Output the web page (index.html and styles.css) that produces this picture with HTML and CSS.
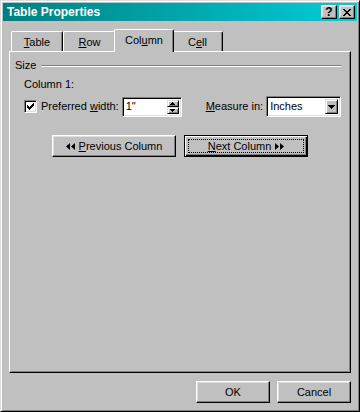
FILE: index.html
```html
<!DOCTYPE html>
<html lang="en">
  <head>
    <meta charset="UTF-8" />
    <meta name="viewport" content="width=device-width, initial-scale=1.0" />
    <title>Table Properties</title>

    <!-- Styles -->
    <link rel="stylesheet" href="styles.css">
  </head>
  <body>
    <div class="window">
      <!-- Title Bar -->
      <div class="titlebar">
        <span class="title">Table Properties</span>
        <div class="title-buttons">
          <button class="title-btn help">?</button>
          <button class="title-btn">
            <svg width="8" height="7" viewBox="0 0 8 7">
              <path d="M0 0h2v1h1v1h2V1h1V0h2v1H7v1H6v1H5v1h1v1h1v1h1v1H6V6H5V5H3v1H2v1H0V6h1V5h1V4h1V3H2V2H1V1H0z" fill="#000" />
            </svg>
          </button>
        </div>
      </div>

      <div class="dialog">
        <!-- Tabs -->
        <div class="tabs">
          <div class="tab tab-table"><span><u>T</u>able</span></div>
          <div class="tab tab-row"><span><u>R</u>ow</span></div>
          <div class="tab tab-column active"><span>Col<u>u</u>mn</span></div>
          <div class="tab tab-cell"><span>C<u>e</u>ll</span></div>
        </div>

        <!-- Tab Panel -->
        <div class="panel">
          <div class="group-title">
            <span>Size</span>
            <div class="etch"></div>
          </div>

          <div class="group-body">
            <div class="caption">Column 1:</div>

            <div class="size-row">
              <label class="check-label">
                <span class="checkbox">
                  <svg width="7" height="7" viewBox="0 0 7 7">
                    <path d="M6 0h1v3H6v1H5v1H4v1H3v1H2V6H1V5H0V2h1v1h1v1h1V3h1V2h1V1h1z" fill="#000" />
                  </svg>
                </span>
                <span>Preferred <u>w</u>idth:</span>
              </label>

              <div class="field spin-field">
                <span class="field-text">1"</span>
                <div class="spinner">
                  <span class="spin-btn">
                    <svg width="5" height="3" viewBox="0 0 5 3"><path d="M2 0h1v1h1v1h1v1H0V2h1V1h1z" fill="#000" /></svg>
                  </span>
                  <span class="spin-btn">
                    <svg width="5" height="3" viewBox="0 0 5 3"><path d="M0 0h5v1H4v1H3v1H2V2H1V1H0z" fill="#000" /></svg>
                  </span>
                </div>
              </div>

              <span class="measure-label"><u>M</u>easure in:</span>

              <div class="field select-field">
                <span class="field-text">Inches</span>
                <span class="drop-btn">
                  <svg width="7" height="4" viewBox="0 0 7 4"><path d="M0 0h7v1H6v1H5v1H4v1H3V3H2V2H1V1H0z" fill="#000" /></svg>
                </span>
              </div>
            </div>
          </div>

          <div class="nav-row">
            <button class="btn nav-btn">
              <svg width="9" height="7" viewBox="0 0 9 7"><path d="M4 0v7L0 3.5zM9 0v7L5 3.5z" fill="#000" /></svg>
              <span><u>P</u>revious Column</span>
            </button>
            <button class="btn nav-btn default">
              <span class="focus">
                <span><u>N</u>ext Column</span>
                <svg width="9" height="7" viewBox="0 0 9 7"><path d="M0 0v7l4-3.5zM5 0v7l4-3.5z" fill="#000" /></svg>
              </span>
            </button>
          </div>
        </div>

        <!-- Footer -->
        <div class="footer">
          <button class="btn footer-btn">OK</button>
          <button class="btn footer-btn">Cancel</button>
        </div>
      </div>
    </div>
  </body>
</html>
```

FILE: styles.css
```css
/* General Styles */
html,
body {
  margin: 0;
  padding: 0;
  background: #c0c0c0;
}

body {
  font-family: "Liberation Sans", Arial, sans-serif;
  font-size: 11px;
  line-height: 13px;
  color: #000;
  white-space: nowrap;
}

u {
  text-decoration: underline;
  text-underline-offset: 1px;
}

button {
  font: inherit;
  color: inherit;
  margin: 0;
  padding: 0;
  background: #c0c0c0;
}

/* Window Frame */
.window {
  width: 360px;
  height: 412px;
  box-sizing: border-box;
  padding: 2px;
  border: 1px solid;
  border-color: #dfdfdf #000 #000 #dfdfdf;
  box-shadow: inset 1px 1px #fff, inset -1px -1px #808080;
  background: #c0c0c0;
  display: flex;
  flex-direction: column;
}

/* Title Bar */
.titlebar {
  height: 18px;
  display: flex;
  align-items: center;
  justify-content: space-between;
  padding: 0 2px 0 4px;
  background: linear-gradient(to right, #008080, #00cdd8);
}

.title {
  color: #fff;
  font-weight: bold;
  font-size: 12px;
}

.title-buttons {
  display: flex;
  gap: 2px;
}

.title-btn {
  width: 16px;
  height: 14px;
  box-sizing: border-box;
  border: 1px solid;
  border-color: #fff #000 #000 #fff;
  box-shadow: inset -1px -1px #808080, inset 1px 1px #dfdfdf;
  display: flex;
  align-items: center;
  justify-content: center;
}

.title-btn.help {
  font-weight: bold;
  font-size: 12px;
  line-height: 11px;
}

/* Dialog Body */
.dialog {
  flex: 1;
  display: flex;
  flex-direction: column;
  padding: 8px 6px 0 6px;
}

/* Tab Styles */
.tabs {
  display: flex;
  align-items: flex-end;
  height: 22px;
  padding-left: 2px;
}

.tab {
  height: 20px;
  box-sizing: border-box;
  border: 1px solid;
  border-color: #fff #000 transparent #fff;
  border-bottom: none;
  border-radius: 2px 2px 0 0;
  box-shadow: inset -1px 0 #808080;
  display: flex;
  align-items: center;
  justify-content: center;
  padding-top: 1px;
}

.tab-table { width: 52px; }
.tab-row { width: 53px; }
.tab-column { width: 56px; }
.tab-cell { width: 51px; }

.tab.active {
  width: 60px;
  height: 23px;
  margin: 0 -2px -1px;
  padding-top: 0;
  padding-bottom: 2px;
  background: #c0c0c0;
  position: relative;
  z-index: 1;
}

/* Panel Styles */
.panel {
  height: 322px;
  box-sizing: border-box;
  border: 1px solid;
  border-color: #fff #000 #000 #fff;
  box-shadow: inset -1px -1px #808080;
  padding: 7px 9px 0 5px;
}

.group-title {
  display: flex;
  align-items: center;
  gap: 5px;
}

.etch {
  flex: 1;
  height: 0;
  border-top: 1px solid #808080;
  border-bottom: 1px solid #fff;
}

.group-body {
  padding-left: 9px;
  margin-top: 6px;
}

.size-row {
  display: flex;
  align-items: center;
  height: 21px;
  margin-top: 5px;
}

.check-label {
  display: flex;
  align-items: center;
  gap: 4px;
}

.checkbox {
  width: 13px;
  height: 13px;
  box-sizing: border-box;
  border: 1px solid;
  border-color: #808080 #fff #fff #808080;
  box-shadow: inset 1px 1px #000, inset -1px -1px #dfdfdf;
  background: #fff;
  display: flex;
  align-items: center;
  justify-content: center;
}

/* Field Styles */
.field {
  flex: none;
  box-sizing: border-box;
  border: 1px solid;
  border-color: #808080 #fff #fff #808080;
  box-shadow: inset 1px 1px #000, inset -1px -1px #dfdfdf;
  background: #fff;
  display: flex;
  align-items: stretch;
  padding: 2px;
}

.field-text {
  flex: 1;
  display: flex;
  align-items: center;
  padding-left: 1px;
}

.spin-field {
  width: 60px;
  height: 20px;
  margin-left: 3px;
}

.spinner {
  display: flex;
  flex-direction: column;
  width: 12px;
}

.spin-btn {
  flex: 1;
  box-sizing: border-box;
  border: 1px solid;
  border-color: #dfdfdf #000 #000 #dfdfdf;
  box-shadow: inset 1px 1px #fff, inset -1px -1px #808080;
  background: #c0c0c0;
  display: flex;
  align-items: center;
  justify-content: center;
}

.measure-label {
  margin-left: 24px;
}

.select-field {
  width: 75px;
  height: 21px;
  margin-left: 3px;
}

.drop-btn {
  width: 13px;
  box-sizing: border-box;
  border: 1px solid;
  border-color: #dfdfdf #000 #000 #dfdfdf;
  box-shadow: inset 1px 1px #fff, inset -1px -1px #808080;
  background: #c0c0c0;
  display: flex;
  align-items: center;
  justify-content: center;
}

/* Button Styles */
.btn {
  box-sizing: border-box;
  border: 1px solid;
  border-color: #fff #000 #000 #fff;
  box-shadow: inset -1px -1px #808080, inset 1px 1px #dfdfdf;
  display: flex;
  align-items: center;
  justify-content: center;
  cursor: pointer;
}

.nav-row {
  display: flex;
  justify-content: center;
  gap: 8px;
  margin-top: 18px;
  padding-left: 4px;
}

.nav-btn {
  width: 124px;
  height: 22px;
  gap: 4px;
}

.btn.default {
  border: 1px solid #000;
  box-shadow: inset 1px 1px #fff, inset -1px -1px #000, inset -2px -2px #808080;
  padding: 3px;
}

.focus {
  flex: 1;
  align-self: stretch;
  border: 1px dotted #000;
  display: flex;
  align-items: center;
  justify-content: center;
  gap: 4px;
}

.footer {
  display: flex;
  justify-content: flex-end;
  gap: 7px;
  margin-top: 8px;
}

.footer-btn {
  width: 74px;
  height: 22px;
}
```
